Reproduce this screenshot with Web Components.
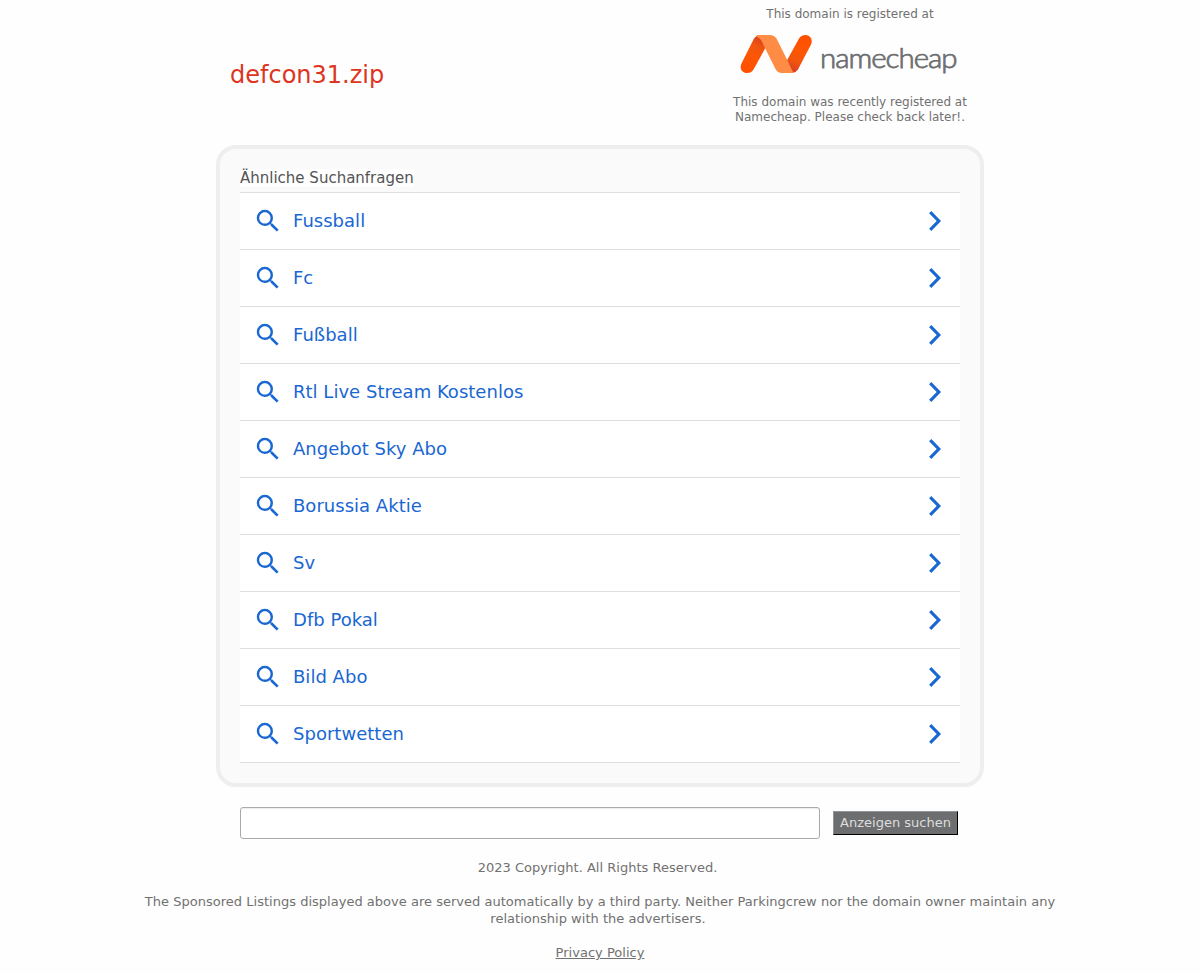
<!DOCTYPE html>
<html lang="de">
<head>
<meta charset="utf-8">
<title>defcon31.zip</title>
<style>
html, body { margin: 0; background: #fefefe; }
body { font-family: "DejaVu Sans", Verdana, sans-serif; color: #717171; }
</style>
</head>
<body>
<parking-page></parking-page>
<script>
function define(name, html, setup) {
  const template = document.createElement('template');
  template.innerHTML = html;
  customElements.define(name, class extends HTMLElement {
    connectedCallback() {
      if (this.shadowRoot) return;
      this.attachShadow({ mode: 'open' }).append(template.content.cloneNode(true));
      if (setup) setup(this, this.shadowRoot);
    }
  });
}

define('registrar-logo', `
<style>:host{display:block;width:224px;height:48px} svg{display:block;overflow:visible}</style>
<svg width="224" height="48" viewBox="738 32 224 48" role="img" aria-label="namecheap">
  <defs>
    <linearGradient id="l" x1="744" y1="70" x2="762" y2="36" gradientUnits="userSpaceOnUse">
      <stop offset="0" stop-color="#ff5000"/><stop offset=".45" stop-color="#fc5604"/><stop offset=".7" stop-color="#f0550f"/><stop offset="1" stop-color="#d83b26"/>
    </linearGradient>
    <linearGradient id="r" x1="808" y1="38" x2="791" y2="72" gradientUnits="userSpaceOnUse">
      <stop offset="0" stop-color="#ff5000"/><stop offset=".45" stop-color="#fc5604"/><stop offset=".7" stop-color="#f0550f"/><stop offset="1" stop-color="#d83b26"/>
    </linearGradient>
  </defs>
  <path fill="url(#l)" d="M760 35Q756 35.400 754 38.500L741.500 63.500C739.200 68.500 742 73 747 73Q751.500 73 753.500 69.500L767 45Z"/>
  <path fill="url(#r)" d="M792 73Q796 72.600 798 69.500L811 44.500C813.300 39.500 810 35 805.500 35Q801 35 799 38.500L785.500 63Z"/>
  <path fill="#ff8c44" d="M758.500 35H770Q774 35 776.500 38.500L788.500 62.500Q791.500 70 794 73H782Q777.500 73 775.500 69L763.500 45Q761 38 756 36.300Q757 35 758.500 35Z"/>
  <text x="820" y="67.800" font-family="'Lato Light', Lato, 'Open Sans', sans-serif" font-weight="400" font-size="26.800" letter-spacing="-.9" fill="#6d6e70" stroke="#6d6e70" stroke-width=".75" textLength="136.600" lengthAdjust="spacingAndGlyphs">namecheap</text>
</svg>`);

define('registrar-note', `
<style>
:host{display:block;width:240px;text-align:center;font-size:12px;line-height:15px}
p{margin:0} registrar-logo{margin:10px 0 15px 8px}
</style>
<p>This domain is registered at</p>
<registrar-logo></registrar-logo>
<p><slot></slot></p>`);

define('site-header', `
<style>
:host{display:flex;justify-content:space-between;align-items:flex-start;width:740px;height:138px;padding-top:7px;margin:0 auto}
h1{margin:54px 0 0;font-size:24px;line-height:28px;font-weight:400;color:#dc3522}
</style>
<h1><slot></slot></h1>
<registrar-note>This domain was recently registered at Namecheap. Please check back later!.</registrar-note>`);

define('search-link', `
<style>
:host{display:block;height:56px;border-bottom:1px solid #dedede;background:#fff}
a{display:flex;align-items:center;height:56px;color:#1967d2;font-size:18px;line-height:22px;letter-spacing:.02px;text-decoration:none}
svg{display:block;flex:none;fill:currentColor}
.lens{width:30px;height:30px;margin:0 10px 0 13px}
.go{width:12.500px;height:20px;margin:0 19px 0 auto}
</style>
<a href="#">
  <svg class="lens" viewBox="0 0 24 24"><path d="M15.500 14h-.79l-.28-.27A6.471 6.471 0 0 0 16 9.500 6.500 6.500 0 1 0 9.500 16c1.610 0 3.090-.59 4.230-1.570l.27.28v.79l5 4.990L20.490 19l-4.990-5zm-6 0C7.010 14 5 11.990 5 9.500S7.010 5 9.500 5 14 7.010 14 9.500 11.990 14 9.500 14z"/></svg>
  <span><slot></slot></span>
  <svg class="go" viewBox="0 0 12.500 20"><path d="M2.300 0 .1 2.200 7.700 10 .1 17.800 2.300 20 12.100 10z"/></svg>
</a>`);

define('related-searches', `
<style>
:host{display:block;box-sizing:border-box;width:768px;height:642px;margin:0 auto;padding:20px;border:4px solid #eee;border-radius:20px;background:#fafafa}
h2{margin:0;height:23px;font-size:15px;line-height:18px;font-weight:400;color:#545454}
h2 span{background:#fefefe;display:inline-block}
nav{border-top:1px solid #dedede}
</style>
<h2><span>Ähnliche Suchanfragen</span></h2>
<nav></nav>`, (host, root) => {
  const nav = root.querySelector('nav');
  for (const term of ['Fussball', 'Fc', 'Fußball', 'Rtl Live Stream Kostenlos', 'Angebot Sky Abo', 'Borussia Aktie', 'Sv', 'Dfb Pokal', 'Bild Abo', 'Sportwetten']) {
    const link = document.createElement('search-link');
    link.textContent = term;
    nav.append(link);
  }
});

define('ad-search', `
<style>
:host{display:flex;align-items:center;gap:13px;width:720px;margin:20px auto 0}
input{box-sizing:border-box;width:580px;height:32px;margin:0;border:1px solid #aaa;border-radius:3px;background:#fff;box-shadow:inset 0 1px 1px #eee;font:13px "DejaVu Sans",sans-serif;padding:4px 8px}
button{box-sizing:border-box;width:125px;height:24px;margin:0;padding:0;border:1px solid;border-color:#909496 #000 #000 #909496;border-radius:0;background:#6d6e70;color:#ddd;font:13px/20px "DejaVu Sans",sans-serif;white-space:nowrap}
</style>
<input type="text" aria-label="Suche"><button type="button"><slot></slot></button>`);

define('site-footer', `
<style>
:host{display:block;width:960px;margin:20px auto 0;text-align:center;font-size:13px;line-height:17px;letter-spacing:.018px}
p{margin:0 0 17px} p:last-child{margin:0} .copy{padding-right:5px} .tail{padding-right:4px}
a{color:inherit}
</style>
<p class="copy">2023 Copyright. All Rights Reserved.</p>
<p>The Sponsored Listings displayed above are served automatically by a third party. Neither Parkingcrew nor the domain owner maintain any <span class="tail">relationship with the advertisers.</span></p>
<p><a href="#">Privacy Policy</a></p>`);

define('parking-page', `
<style>:host{display:block}</style>
<site-header>defcon31.zip</site-header>
<related-searches></related-searches>
<ad-search>Anzeigen suchen</ad-search>
<site-footer></site-footer>`);
</script>
</body>
</html>
